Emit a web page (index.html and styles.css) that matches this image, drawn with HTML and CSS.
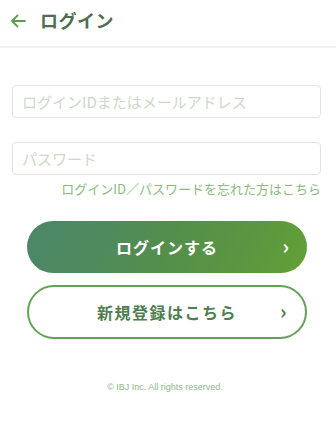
FILE: index.html
```html
<!DOCTYPE html>
<html lang="ja">
<head>
<meta charset="utf-8">
<link rel="stylesheet" href="styles.css">
</head>
<body>
<header class="header">
  <svg class="back" width="16" height="14" viewBox="0 0 16 14"><path d="M15 7H2M7.5 1.5L2 7l5.5 5.5" fill="none" stroke="#5e9c4c" stroke-width="1.8" stroke-linecap="round" stroke-linejoin="round"/></svg>
  <h1 class="title">ログイン</h1>
</header>
<main class="main">
  <div class="field"><input class="input" placeholder="ログインIDまたはメールアドレス"></div>
  <div class="field field2"><input class="input" type="password" placeholder="パスワード"></div>
  <div class="forgot">ログインID／パスワードを忘れた方はこちら</div>
  <div class="buttons">
    <button class="btn btn-primary"><span>ログインする</span><span class="chev">›</span></button>
    <button class="btn btn-outline"><span>新規登録はこちら</span><span class="chev">›</span></button>
  </div>
  <footer class="footer">© IBJ Inc. All rights reserved.</footer>
</main>
</body>
</html>
```
FILE: styles.css
```css
html, body { margin: 0; padding: 0; background: #fff; }
body { font-family: "Noto Sans CJK JP", "Noto Sans", sans-serif; width: 336px; }
.header { height: 46px; display: flex; align-items: center; padding-left: 10px; border-bottom: 2px solid #f0f3f0; box-sizing: content-box; }
.back { margin-top: -4px; }
.title { margin: 0 0 0 14px; font-size: 18px; font-weight: 700; color: #4f6e52; line-height: 1; margin-top: -6px; letter-spacing: 0.5px; }
.main { padding: 37px 15px 0 12px; }
.field2 { margin-top: 24px; }
.input { box-sizing: border-box; width: 309px; height: 33px; border: 1px solid #dfe7dc; border-radius: 4px; padding: 0 9px; font-family: inherit; font-size: 15px; color: #333; outline: none; }
.input::placeholder { color: #ccd9c9; }
.forgot { text-align: right; font-size: 13px; color: #8cba7e; margin-top: 5px; line-height: 18px; width: 309px; }
.buttons { display: flex; flex-direction: column; gap: 12px; margin-top: 23px; padding-left: 15px; }
.btn { position: relative; box-sizing: border-box; width: 280px; height: 52px; border-radius: 26px; font-family: inherit; font-size: 16px; font-weight: 700; display: flex; align-items: center; justify-content: center; letter-spacing: 1px; cursor: pointer; }
.btn-primary { border: none; color: #fff; background: linear-gradient(115deg, #4b8669 0%, #4f8a5c 30%, #548e4c 50%, #5a9642 75%, #62a136 100%); }
.btn-outline { border: 2px solid #65a159; background: #fff; color: #4e7e4f; height: 54px; border-radius: 27px; letter-spacing: 1.5px; }
.chev { position: absolute; right: 17px; top: 50%; transform: translateY(-55%); font-size: 20px; font-weight: 700; }
.btn-outline .chev { color: #4e7e4f; }
.footer { text-align: center; font-size: 9px; color: #8fb98a; margin-top: 43px; padding-right: 3px; font-family: "Liberation Sans", Arial, sans-serif; }
```
